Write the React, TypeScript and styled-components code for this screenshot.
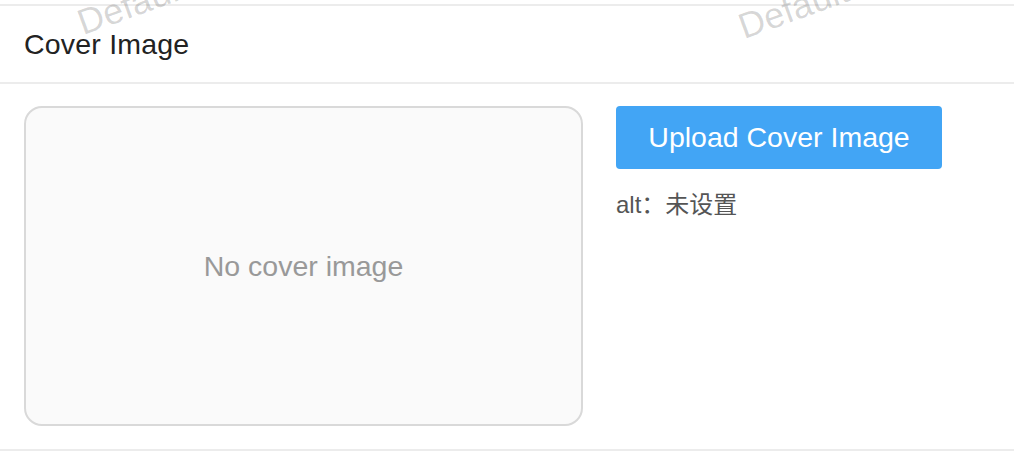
import React from "react";
import styled, { createGlobalStyle } from "styled-components";

const GlobalStyle = createGlobalStyle`
  html, body {
    margin: 0;
    padding: 0;
    background: #ffffff;
    font-family: "Liberation Sans", "Noto Sans CJK SC", Arial, sans-serif;
  }
  * {
    box-sizing: border-box;
  }
`;

function App() {
  return (
    <Page>
      <GlobalStyle />
      <Section>
        <Header>
          <Title>Cover Image</Title>
        </Header>
        <Body>
          <Preview>
            <Empty>No cover image</Empty>
          </Preview>
          <Side>
            <UploadButton type="button">Upload Cover Image</UploadButton>
            <AltText>alt：未设置</AltText>
          </Side>
        </Body>
      </Section>
      <Watermark left={85} top={5}>
        Default
      </Watermark>
      <Watermark left={746} top={9}>
        Default
      </Watermark>
    </Page>
  );
}
export default App;

const Page = styled.div`
  position: relative;
  width: 1014px;
  height: 458px;
  overflow: hidden;
  padding-top: 4px;
  background: #ffffff;
`;
const Section = styled.section`
  border-top: 2px solid #ececec;
  border-bottom: 2px solid #ececec;
`;
const Header = styled.div`
  height: 78px;
  display: flex;
  align-items: center;
  padding: 0 24px;
  border-bottom: 2px solid #ececec;
`;
const Title = styled.h2`
  margin: 0;
  font-size: 28.5px;
  font-weight: 400;
  color: #222222;
  letter-spacing: 0.2px;
`;
const Body = styled.div`
  display: flex;
  align-items: flex-start;
  gap: 33px;
  padding: 22px 24px 23px;
`;
const Preview = styled.div`
  width: 559px;
  height: 320px;
  border: 2px solid #d9d9d9;
  border-radius: 18px;
  background: #fafafa;
  display: flex;
  align-items: center;
  justify-content: center;
`;
const Empty = styled.span`
  font-size: 28.5px;
  color: #999999;
`;
const Side = styled.div`
  display: flex;
  flex-direction: column;
  align-items: flex-start;
`;
const UploadButton = styled.button`
  width: 326px;
  height: 63px;
  border: none;
  border-radius: 4px;
  background: #42a5f5;
  color: #ffffff;
  font-family: inherit;
  font-size: 28.5px;
  padding: 0;
  cursor: pointer;
`;
const AltText = styled.div`
  margin-top: 19px;
  font-size: 24px;
  line-height: 34px;
  color: #555555;
`;
const Watermark = styled.span<{ left: number; top: number }>`
  position: absolute;
  left: ${(p) => p.left}px;
  top: ${(p) => p.top}px;
  font-size: 36px;
  line-height: 36px;
  color: rgba(0, 0, 0, 0.16);
  transform-origin: left bottom;
  transform: rotate(-20deg);
  pointer-events: none;
  white-space: nowrap;
`;
